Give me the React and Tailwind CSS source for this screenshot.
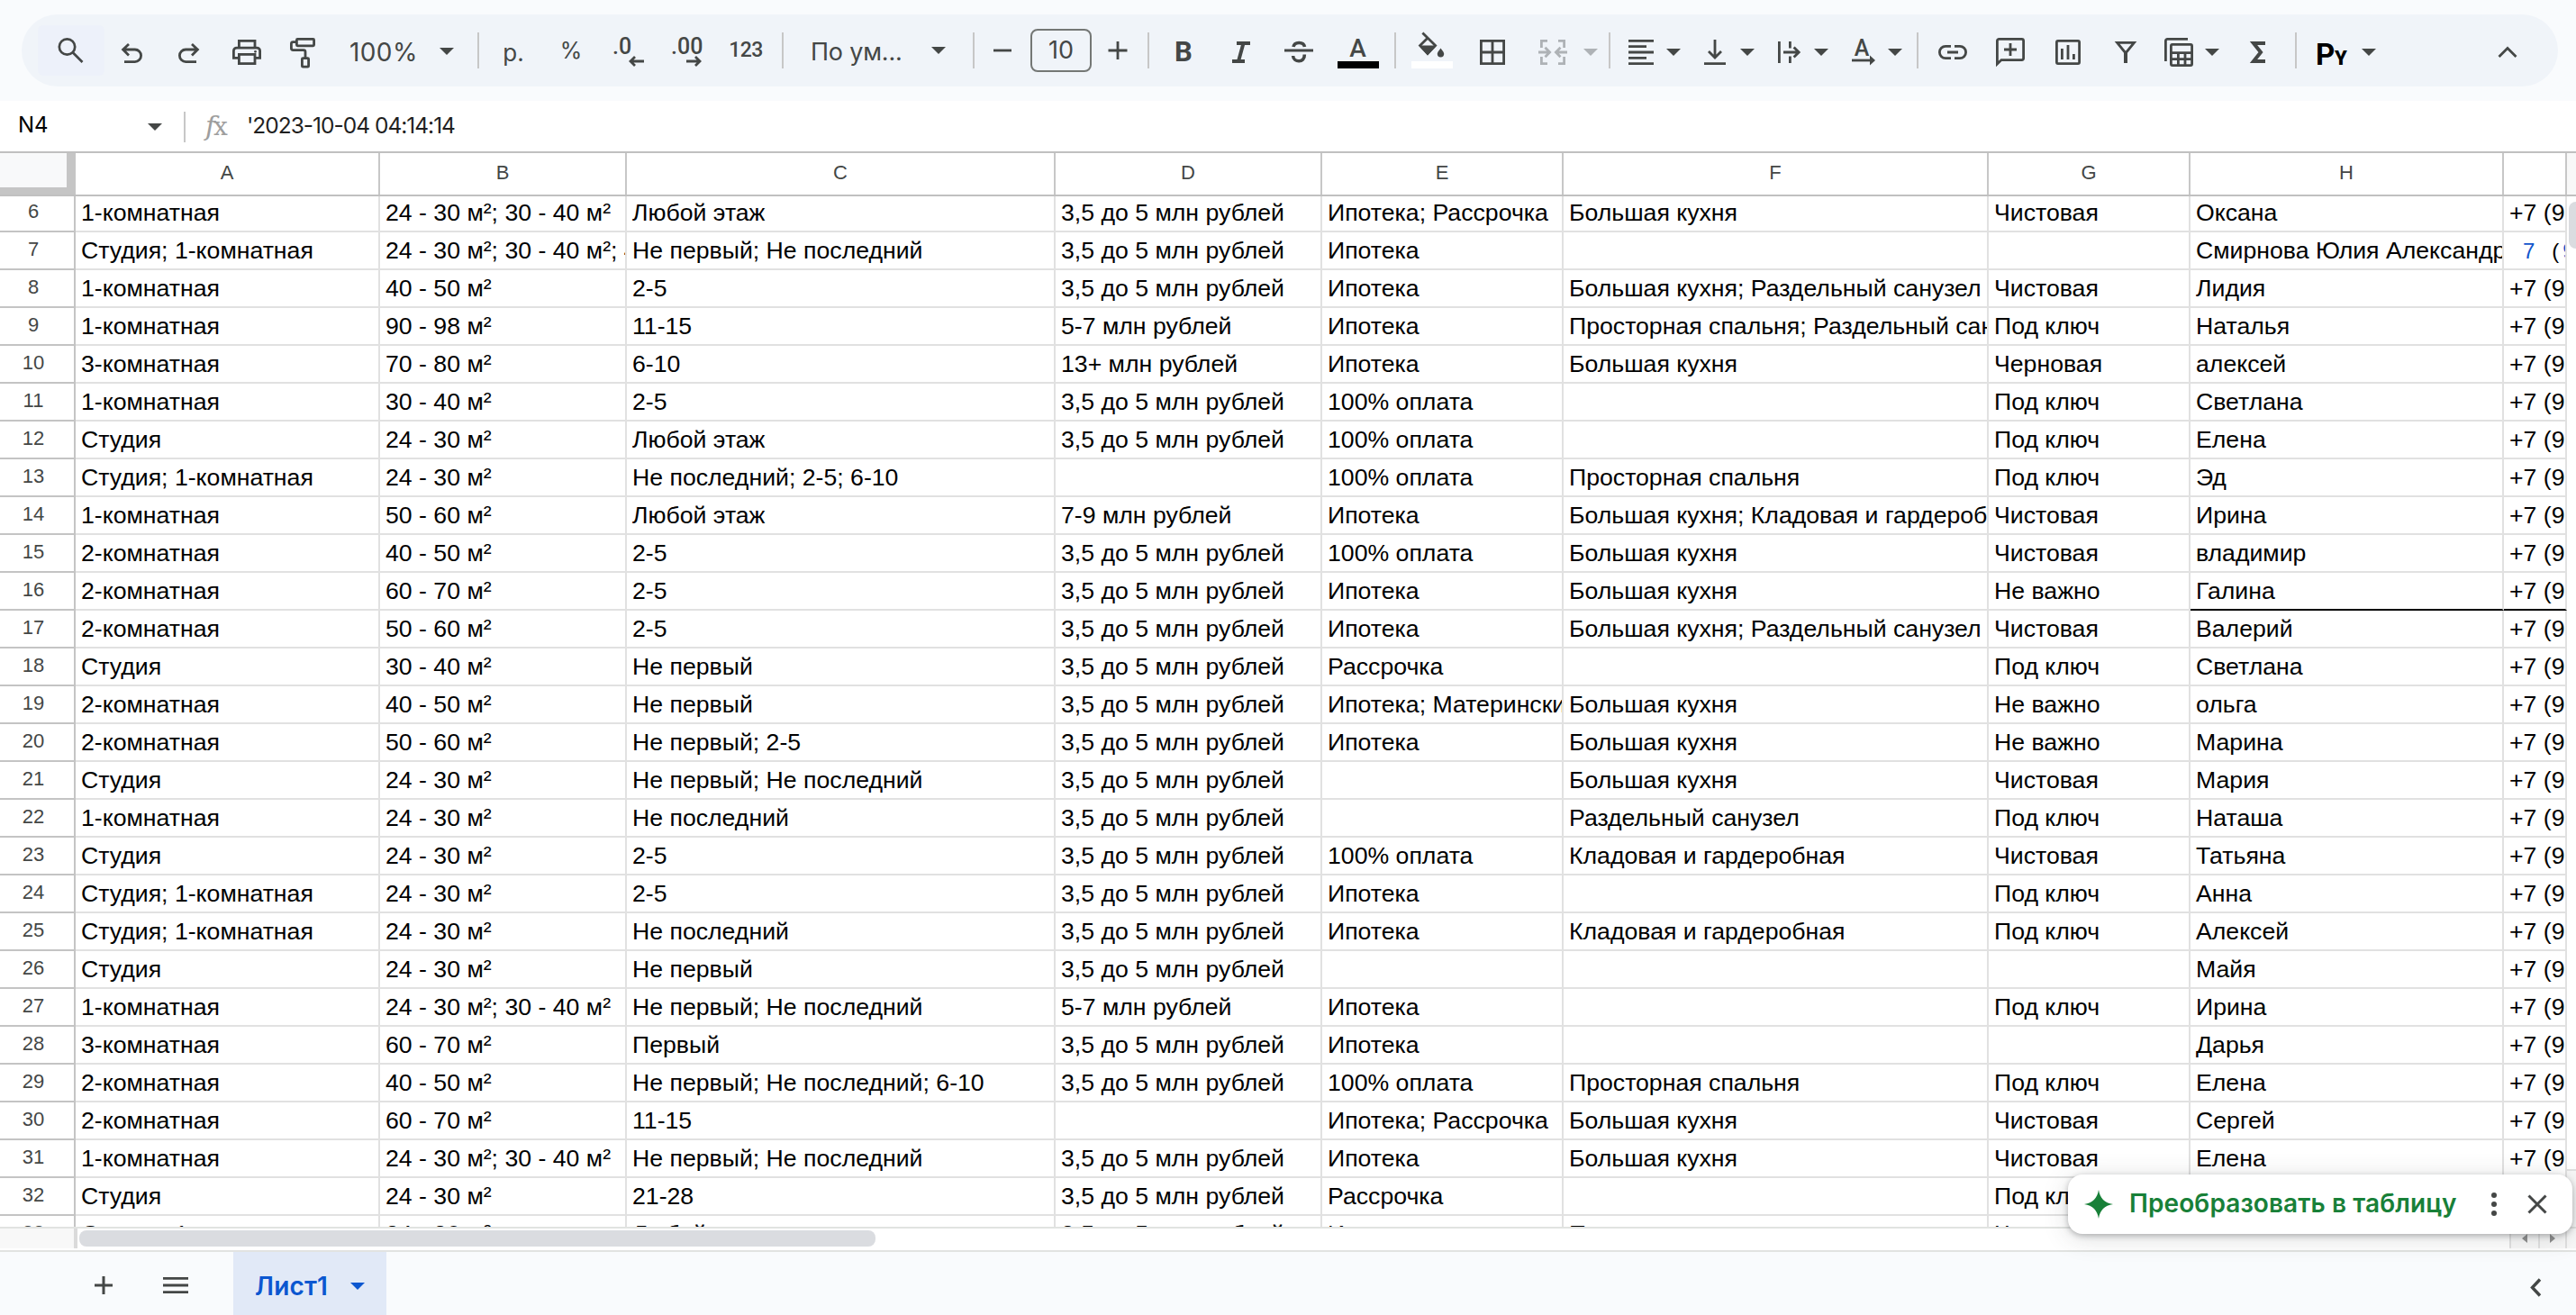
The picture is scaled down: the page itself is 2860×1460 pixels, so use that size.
const columns = [
  { name: 'A', width: 'w-[338px]' },
  { name: 'B', width: 'w-[274px]' },
  { name: 'C', width: 'w-[476px]' },
  { name: 'D', width: 'w-[296px]' },
  { name: 'E', width: 'w-[268px]' },
  { name: 'F', width: 'w-[472px]' },
  { name: 'G', width: 'w-[224px]' },
  { name: 'H', width: 'w-[348px]' },
  { name: '', width: 'w-[70px]' }
]

const PRICE = '3,5 до 5 млн рублей'
const PHONE = '+7 (9'

const rows = [
  [6, '1-комнатная', '24 - 30 м²; 30 - 40 м²', 'Любой этаж', PRICE, 'Ипотека; Рассрочка', 'Большая кухня', 'Чистовая', 'Оксана', PHONE],
  [7, 'Студия; 1-комнатная', '24 - 30 м²; 30 - 40 м²; 40 - 50 м²', 'Не первый; Не последний', PRICE, 'Ипотека', '', '', 'Смирнова Юлия Александровна', null],
  [8, '1-комнатная', '40 - 50 м²', '2-5', PRICE, 'Ипотека', 'Большая кухня; Раздельный санузел', 'Чистовая', 'Лидия', PHONE],
  [9, '1-комнатная', '90 - 98 м²', '11-15', '5-7 млн рублей', 'Ипотека', 'Просторная спальня; Раздельный санузел', 'Под ключ', 'Наталья', PHONE],
  [10, '3-комнатная', '70 - 80 м²', '6-10', '13+ млн рублей', 'Ипотека', 'Большая кухня', 'Черновая', 'алексей', PHONE],
  [11, '1-комнатная', '30 - 40 м²', '2-5', PRICE, '100% оплата', '', 'Под ключ', 'Светлана', PHONE],
  [12, 'Студия', '24 - 30 м²', 'Любой этаж', PRICE, '100% оплата', '', 'Под ключ', 'Елена', PHONE],
  [13, 'Студия; 1-комнатная', '24 - 30 м²', 'Не последний; 2-5; 6-10', '', '100% оплата', 'Просторная спальня', 'Под ключ', 'Эд', PHONE],
  [14, '1-комнатная', '50 - 60 м²', 'Любой этаж', '7-9 млн рублей', 'Ипотека', 'Большая кухня; Кладовая и гардеробная', 'Чистовая', 'Ирина', PHONE],
  [15, '2-комнатная', '40 - 50 м²', '2-5', PRICE, '100% оплата', 'Большая кухня', 'Чистовая', 'владимир', PHONE],
  [16, '2-комнатная', '60 - 70 м²', '2-5', PRICE, 'Ипотека', 'Большая кухня', 'Не важно', 'Галина', PHONE],
  [17, '2-комнатная', '50 - 60 м²', '2-5', PRICE, 'Ипотека', 'Большая кухня; Раздельный санузел', 'Чистовая', 'Валерий', PHONE],
  [18, 'Студия', '30 - 40 м²', 'Не первый', PRICE, 'Рассрочка', '', 'Под ключ', 'Светлана', PHONE],
  [19, '2-комнатная', '40 - 50 м²', 'Не первый', PRICE, 'Ипотека; Материнский капитал', 'Большая кухня', 'Не важно', 'ольга', PHONE],
  [20, '2-комнатная', '50 - 60 м²', 'Не первый; 2-5', PRICE, 'Ипотека', 'Большая кухня', 'Не важно', 'Марина', PHONE],
  [21, 'Студия', '24 - 30 м²', 'Не первый; Не последний', PRICE, '', 'Большая кухня', 'Чистовая', 'Мария', PHONE],
  [22, '1-комнатная', '24 - 30 м²', 'Не последний', PRICE, '', 'Раздельный санузел', 'Под ключ', 'Наташа', PHONE],
  [23, 'Студия', '24 - 30 м²', '2-5', PRICE, '100% оплата', 'Кладовая и гардеробная', 'Чистовая', 'Татьяна', PHONE],
  [24, 'Студия; 1-комнатная', '24 - 30 м²', '2-5', PRICE, 'Ипотека', '', 'Под ключ', 'Анна', PHONE],
  [25, 'Студия; 1-комнатная', '24 - 30 м²', 'Не последний', PRICE, 'Ипотека', 'Кладовая и гардеробная', 'Под ключ', 'Алексей', PHONE],
  [26, 'Студия', '24 - 30 м²', 'Не первый', PRICE, '', '', '', 'Майя', PHONE],
  [27, '1-комнатная', '24 - 30 м²; 30 - 40 м²', 'Не первый; Не последний', '5-7 млн рублей', 'Ипотека', '', 'Под ключ', 'Ирина', PHONE],
  [28, '3-комнатная', '60 - 70 м²', 'Первый', PRICE, 'Ипотека', '', '', 'Дарья', PHONE],
  [29, '2-комнатная', '40 - 50 м²', 'Не первый; Не последний; 6-10', PRICE, '100% оплата', 'Просторная спальня', 'Под ключ', 'Елена', PHONE],
  [30, '2-комнатная', '60 - 70 м²', '11-15', '', 'Ипотека; Рассрочка', 'Большая кухня', 'Чистовая', 'Сергей', PHONE],
  [31, '1-комнатная', '24 - 30 м²; 30 - 40 м²', 'Не первый; Не последний', PRICE, 'Ипотека', 'Большая кухня', 'Чистовая', 'Елена', PHONE],
  [32, 'Студия', '24 - 30 м²', '21-28', PRICE, 'Рассрочка', '', 'Под ключ', '', ''],
  [33, 'Студия; 1-комнатная', '24 - 30 м²', 'Любой этаж', PRICE, 'Ипотека', 'Просторная спальня', 'Чистовая', '', '']
]

function Icon({ children, width = 2.8, className = '' }) {
  return (
    <svg
      viewBox="0 0 36 36"
      className={`size-9 shrink-0 overflow-visible ${className}`}
      fill="none"
      stroke="currentColor"
      strokeWidth={width}
    >
      {children}
    </svg>
  )
}

function Tool({ children, className = 'w-16' }) {
  return <button className={`flex h-14 shrink-0 items-center justify-center ${className}`}>{children}</button>
}

function Caret({ className = '' }) {
  return (
    <svg viewBox="0 0 16 8" className={`h-2 w-4 shrink-0 ${className}`} fill="currentColor">
      <path d="M0 0H16L8 8Z" />
    </svg>
  )
}

function Divider({ className = '' }) {
  return <div className={`mb-1 h-10 w-0.5 shrink-0 bg-[#c7c7c7] ${className}`} />
}

function Toolbar() {
  return (
    <div className="h-[112px] bg-[#f9fbfd] pt-4 pr-5 pl-6">
      <div className="flex h-20 items-center rounded-full bg-[#f0f4f9] pt-1 pl-[18px] font-[Inter,sans-serif] text-[#444746]">
        <Tool className="mb-1 w-[74px] rounded-md bg-[#edf1fa]">
          <Icon width={2.7}>
            <circle cx="13.5" cy="14" r="8.7" />
            <path d="M19.8 20.2L30.5 31" />
          </Icon>
        </Tool>
        <Tool className="mr-0.5 w-[60px]">
          <Icon><path d="M15 9L8.6 15L15 21.4M8.6 15H21.8a6.8 6.8 0 0 1 0 13.6H10" /></Icon>
        </Tool>
        <Tool>
          <Icon><path d="M21 9L27.4 15L21 21.4M27.4 15H14.2a6.8 6.8 0 0 0 0 13.6H26" /></Icon>
        </Tool>
        <Tool>
          <Icon>
            <path d="M9 24.4H3.4V16.5a3.4 3.4 0 0 1 3.4-3.4H29.2a3.4 3.4 0 0 1 3.4 3.4V24.4H27" />
            <path d="M9.4 13V5.4H27V13" />
            <rect x="9.4" y="20.4" width="17.6" height="10.2" />
            <circle cx="27.5" cy="17.3" r="1.4" fill="currentColor" stroke="none" />
          </Icon>
        </Tool>
        <Tool>
          <Icon>
            <rect x="9.4" y="3.4" width="19.2" height="7.4" rx="1" />
            <path d="M9 6.6H5.4a2 2 0 0 0-2 2V13.6a2 2 0 0 0 2 2H17a2 2 0 0 1 2 2V24" />
            <rect x="15.4" y="24.6" width="7.2" height="9.6" rx="1" />
          </Icon>
        </Tool>
        <button className="flex w-[160px] items-center justify-between pr-[26px] pl-[18px]">
          <span className="text-[28px] leading-none tracking-[0.4px]">100%</span>
          <Caret className="mb-0.5" />
        </button>
        <Divider />
        <Tool className="ml-1.5 w-16 text-[26px]">р.</Tool>
        <Tool className="w-16 pb-0.5 text-[25px]">%</Tool>
        <Tool>
          <Icon>
            <text x="0" y="20" fill="currentColor" stroke="none" className="font-[Roboto,sans-serif] text-[25px] font-medium">.0</text>
            <path d="M35 28H20M25 23L20 28L25 33" />
          </Icon>
        </Tool>
        <Tool>
          <Icon>
            <text x="1" y="20" fill="currentColor" stroke="none" className="font-[Roboto,sans-serif] text-[25px] font-medium">.00</text>
            <path d="M18 28H33M28 23L33 28L28 33" />
          </Icon>
        </Tool>
        <Tool className="mr-1.5 w-[68px] pb-1 font-[Roboto,sans-serif] text-[23px] font-medium tracking-[-0.6px]">123</Tool>
        <Divider />
        <button className="flex w-[210px] items-center justify-between pr-[30px] pl-[30px]">
          <span className="pb-0.5 text-[27px] leading-none tracking-[-0.2px]">По ум...</span>
          <Caret className="mb-1" />
        </button>
        <Divider />
        <Tool className="mb-1 ml-1.5 w-[50px]">
          <Icon><path d="M8 18H28" /></Icon>
        </Tool>
        <div className="mb-1 ml-1.5 flex h-12 w-[68px] items-center justify-center rounded-lg border-2 border-[#747775] text-[27px]">
          10
        </div>
        <Tool className="mb-1 ml-1 w-[50px]">
          <Icon><path d="M7.5 18H28.5M18 8V28" /></Icon>
        </Tool>
        <Divider className="ml-2" />
        <Tool className="ml-1.5 w-16 font-[Roboto,sans-serif] text-[31px] font-bold">B</Tool>
        <Tool>
          <Icon width={4}>
            <path d="M13 8H28M8 28H22M20.5 8L15 28" />
          </Icon>
        </Tool>
        <Tool>
          <Icon width={3}>
            <path d="M2 16H34" />
            <path strokeWidth="3.6" d="M12 12C13 6 23.5 6 24.5 12M11.6 22C12 29.8 24.8 30.2 24.3 20.5" />
          </Icon>
        </Tool>
        <Tool className="mr-1.5 w-[68px]">
          <Icon>
            <text x="17.5" y="23" textAnchor="middle" fill="currentColor" stroke="none" className="font-[Roboto,sans-serif] text-[28px] font-medium">A</text>
            <rect x="-5" y="28" width="46" height="8" fill="#000" stroke="none" />
          </Icon>
        </Tool>
        <Divider />
        <Tool className="ml-1.5 w-[68px]">
          <Icon>
            <path d="M7.4-3.6L21.6 10.6L13 19.4L4.6 10.6L13.2 2" />
            <path d="M3.2 10.6H23L13 21.4Z" fill="currentColor" stroke="none" />
            <path d="M27.5 13.4C30 16.6 31.2 18.4 31.2 19.8a3.7 3.7 0 0 1-7.4 0C23.8 18.4 25 16.6 27.5 13.4Z" fill="currentColor" stroke="none" />
            <rect x="-5" y="28" width="46" height="8" fill="#fff" stroke="none" />
          </Icon>
        </Tool>
        <Tool className="w-[66px]">
          <Icon><path d="M5.4 5.4H30.6V30.6H5.4ZM18 5V31M5 18H31" /></Icon>
        </Tool>
        <Tool className="w-[68px] text-[#aeb2b6]">
          <Icon>
            <path d="M12 5.4H5.4V13M5.4 23V30.6H12M24 5.4H30.6V13M30.6 23V30.6H24" />
            <path d="M2 18H14M9.5 12.8L14.6 18L9.5 23.2M34 18H22M26.5 12.8L21.4 18L26.5 23.2" />
          </Icon>
        </Tool>
        <Caret className="mr-3 text-[#aeb2b6]" />
        <Divider />
        <Tool className="ml-1.5 w-14">
          <Icon><path d="M4 5.4H32M4 11.7H24M4 18H32M4 24.3H24M4 30.6H32" /></Icon>
        </Tool>
        <Caret className="mr-2.5" />
        <Tool className="w-14">
          <Icon><path d="M18 4V24M11 17L18 24L25 17M6 30.6H30" /></Icon>
        </Tool>
        <Caret className="mr-2.5" />
        <Tool className="w-14">
          <Icon><path d="M7.4 6V30M19.4 6V13.4M19.4 22.6V30M12 18H29M23.6 12.4L29.2 18L23.6 23.6" /></Icon>
        </Tool>
        <Caret className="mr-2.5" />
        <Tool className="w-14">
          <Icon>
            <text x="17" y="22" textAnchor="middle" fill="currentColor" stroke="none" className="font-[Roboto,sans-serif] text-[25px] font-medium">A</text>
            <path d="M6 27H28" />
            <path d="M26 21.5L32 27L26 32.5Z" fill="currentColor" stroke="none" />
          </Icon>
        </Tool>
        <Caret className="mr-4" />
        <Divider />
        <Tool className="ml-1.5 w-16">
          <Icon><path d="M16 11.4H10a6.6 6.6 0 0 0 0 13.2H16M20 11.4H26a6.6 6.6 0 0 1 0 13.2H20M12 18H24" /></Icon>
        </Tool>
        <Tool>
          <Icon>
            <path d="M3.4 31V5.4a2 2 0 0 1 2-2H30.6a2 2 0 0 1 2 2V24.6a2 2 0 0 1-2 2H8Z" />
            <path d="M18 8V22M11 15H25" />
          </Icon>
        </Tool>
        <Tool>
          <Icon>
            <rect x="5.4" y="5.4" width="25.2" height="25.2" rx="1.5" />
            <path d="M11.4 14V26M18 10V26M24.4 20V26" />
          </Icon>
        </Tool>
        <Tool>
          <Icon>
            <path d="M8.6 7.4H27.4L18 19Z" />
            <path strokeWidth="4" d="M18 17V30" />
          </Icon>
        </Tool>
        <Tool className="w-14">
          <Icon>
            <path d="M2.4 28V5.4a2 2 0 0 1 2-2H27" />
            <rect x="8.4" y="9.4" width="23.2" height="23.2" rx="1.5" />
            <path d="M8 18.6H32M8 25.6H32M16.4 18V32M24 18V32" />
          </Icon>
        </Tool>
        <Caret className="mr-2.5" />
        <Tool className="w-[66px]">
          <Icon width={4}><path d="M26 8H13L21 18L13 28H26" /></Icon>
        </Tool>
        <Divider className="ml-2" />
        <Tool className="ml-3 w-14 text-black">
          <Icon>
            <text x="-1" y="32" fill="currentColor" stroke="none" className="font-[Roboto,sans-serif] text-[33px] font-bold">P</text>
            <text x="20" y="32" fill="currentColor" stroke="none" className="font-[Roboto,sans-serif] text-[22px] font-black">Y</text>
          </Icon>
        </Tool>
        <Caret className="ml-1" />
        <Tool className="mr-6 ml-auto w-16">
          <Icon><path d="M8.5 23L18 13.5L27.5 23" /></Icon>
        </Tool>
      </div>
    </div>
  )
}

function FormulaBar() {
  return (
    <div className="flex h-14 items-center bg-white pb-1 font-[Inter,sans-serif] text-[#1f1f1f]">
      <span className="mt-0.5 w-[144px] pl-5 text-[24px] leading-none text-black">N4</span>
      <Caret className="mt-1.5 ml-5 text-[#444746]" />
      <div className="mt-1.5 ml-6 h-[34px] w-0.5 bg-[#c7c7c7]" />
      <span className="mt-1 ml-[22px] flex w-[46px] items-baseline text-[#9e9e9e]">
        <span className="font-['DejaVu_Serif',serif] text-[30px] leading-none italic">f</span>
        <span className="-ml-0.5 font-['DejaVu_Serif',serif] text-[28px] leading-none">x</span>
      </span>
      <span className="mt-0.5 text-[24.5px] leading-none tracking-[-1px]">'2023-10-04 04:14:14</span>
    </div>
  )
}

function ColumnHeaders() {
  return (
    <div className="flex h-[50px] border-y-2 border-[#c0c0c0] bg-white">
      <div className="h-[46px] w-[84px] shrink-0 border-r-[10px] border-b-8 border-[#c5c5c5] bg-[#f8f9fa]" />
      {columns.map((col) => (
        <div
          key={col.name}
          className={`${col.width} flex shrink-0 items-center justify-center border-r-2 border-[#c7c7c7] pb-[3px] text-[22px] text-[#444746]`}
        >
          {col.name}
        </div>
      ))}
      <div className="grow bg-[#f8f8f8]" />
    </div>
  )
}

function PhoneLink() {
  return (
    <span className="pl-[15px] text-[24px]">
      <span className="text-[#1155cc]">7</span>
      <span className="pl-[19px]">(</span>
      <span className="pl-1 text-[#1155cc]">9</span>
    </span>
  )
}

function Row({ row }) {
  const [number, ...cells] = row
  return (
    <div className="flex h-[42px] shrink-0">
      <div className="w-[84px] shrink-0 border-r-2 border-b-2 border-[#c4c4c4] pr-2 text-center text-[22px] leading-[37px] text-[#444746]">
        {number}
      </div>
      {cells.map((text, i) => (
        <div
          key={i}
          className={`${columns[i].width} shrink-0 overflow-hidden border-r-2 border-b-2 border-r-[#e1e1e1] pl-1.5 text-[26.67px] leading-[41px] whitespace-nowrap text-black ${
            number === 16 && i > 6 ? 'border-b-black' : 'border-b-[#e1e1e1]'
          }`}
        >
          {text === null ? <PhoneLink /> : text}
        </div>
      ))}
    </div>
  )
}

function Grid() {
  return (
    <div className="flex h-[1144px]">
      <div className="w-[2850px] shrink-0 overflow-hidden">
        <div className="-mt-0.5 flex flex-col">
          {rows.map((row) => (
            <Row key={row[0]} row={row} />
          ))}
        </div>
      </div>
      <div className="flex w-[10px] flex-col justify-between overflow-hidden bg-white pt-1.5">
        <div className="ml-0.5 h-[52px] w-4 rounded-lg bg-[#dadce0]" />
        <div className="h-16 border-t-2 border-[#e1e1e1] bg-[#f8f8f8]" />
      </div>
    </div>
  )
}

function HorizontalScroll() {
  return (
    <div className="flex h-7 border-y-2 border-[#e1e3e1] bg-white">
      <div className="h-[22px] w-[86px] border-r-4 border-[#dadada] bg-[#f8f8f8]" />
      <div className="mt-0.5 ml-0.5 h-[18px] w-[884px] rounded-lg bg-[#dadce0]" />
      <div className="ml-auto flex h-[22px] w-[74px] bg-[#f8f8f8] text-[#8f8f8f]">
        <div className="flex w-8 items-center justify-center border-l-2 border-[#e1e1e1]">
          <svg viewBox="0 0 6 10" className="h-2.5 w-1.5" fill="currentColor"><path d="M6 0V10L0 5Z" /></svg>
        </div>
        <div className="flex w-8 items-center justify-center border-x-2 border-[#e1e1e1]">
          <svg viewBox="0 0 6 10" className="h-2.5 w-1.5" fill="currentColor"><path d="M0 0V10L6 5Z" /></svg>
        </div>
      </div>
    </div>
  )
}

function SheetTabs() {
  return (
    <div className="flex h-[70px] items-center bg-[#f9fbfd] text-[#444746]">
      <button className="mt-1 ml-[97px]">
        <Icon width={3}><path d="M8 18H28M18 8V28" /></Icon>
      </button>
      <button className="mt-1 ml-11">
        <Icon><path d="M4 10.4H32M4 18H32M4 25.6H32" /></Icon>
      </button>
      <button className="ml-[46px] flex h-full w-[170px] items-center bg-[#e1e9f7] pt-1.5 pl-6 font-[Inter,sans-serif] text-[28px] font-semibold text-[#0b57d0]">
        <span className="w-[106px] text-left tracking-[0.2px]">Лист1</span>
        <Caret />
      </button>
      <button className="mr-[26px] mb-[-10px] ml-auto">
        <Icon width={3.4}><path d="M22 8.5L13.5 17.5L22 26.5" /></Icon>
      </button>
    </div>
  )
}

function ConvertPopup() {
  return (
    <div className="absolute top-[1304px] left-[2296px] flex h-[66px] w-[560px] items-center rounded-2xl bg-white font-[Inter,sans-serif] text-[#444746] shadow-[0_2px_6px_rgba(60,64,67,0.35),0_4px_28px_rgba(60,64,67,0.18)]">
      <svg viewBox="0 0 32 32" className="ml-[18px] size-8 text-[#188038]" fill="currentColor">
        <path d="M16 0C17.6 9.6 22.4 14.4 32 16C22.4 17.6 17.6 22.4 16 32C14.4 22.4 9.6 17.6 0 16C9.6 14.4 14.4 9.6 16 0Z" />
      </svg>
      <span className="ml-[18px] w-[387px] pb-0.5 text-[28px] font-semibold tracking-[0.1px] whitespace-nowrap text-[#188038]">
        Преобразовать в таблицу
      </span>
      <Icon>
        <g fill="currentColor" stroke="none">
          <circle cx="18" cy="8" r="3" />
          <circle cx="18" cy="18" r="3" />
          <circle cx="18" cy="28" r="3" />
        </g>
      </Icon>
      <Icon className="ml-3" width={3}><path d="M8.5 8.5L27.5 27.5M27.5 8.5L8.5 27.5" /></Icon>
    </div>
  )
}

export default function App() {
  return (
    <div className="relative flex h-[1460px] w-[2860px] flex-col overflow-hidden bg-white font-['Liberation_Sans',Arial,sans-serif]">
      <Toolbar />
      <FormulaBar />
      <ColumnHeaders />
      <Grid />
      <HorizontalScroll />
      <SheetTabs />
      <ConvertPopup />
    </div>
  )
}
